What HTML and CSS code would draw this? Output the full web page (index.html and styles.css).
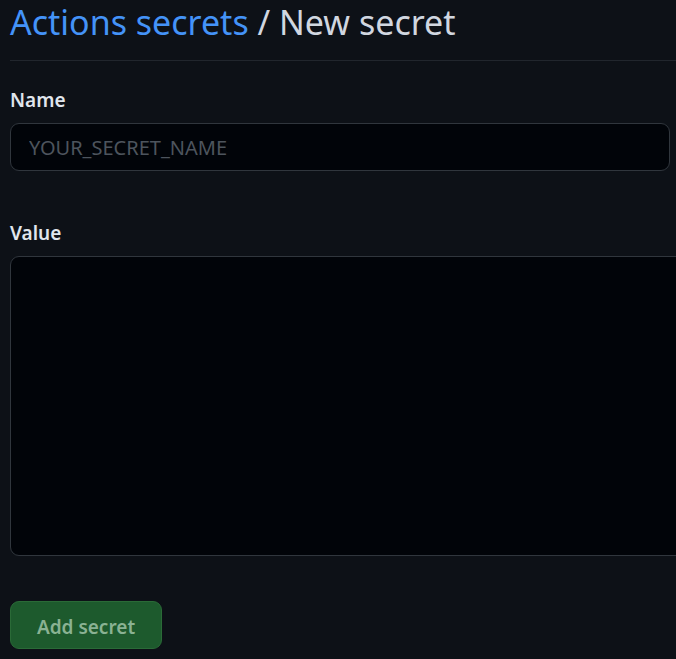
FILE: index.html
```html
<!DOCTYPE html>
<html>
<head>
<meta charset="utf-8">
<link rel="stylesheet" href="styles.css">
</head>
<body>
<div class="page">
  <div class="subhead">
    <h2 class="subhead-heading"><a class="crumb" href="#">Actions secrets</a> / New secret</h2>
  </div>
  <form class="form">
    <div class="group">
      <label class="label" for="name">Name</label>
      <input class="input" id="name" type="text" placeholder="YOUR_SECRET_NAME">
    </div>
    <div class="group group-value">
      <label class="label" for="value">Value</label>
      <textarea class="textarea" id="value"></textarea>
    </div>
    <button class="btn" type="button" disabled>Add secret</button>
  </form>
</div>
</body>
</html>
```
FILE: styles.css
```css
html, body {
  margin: 0;
  padding: 0;
  background: #0d1117;
  color: #e6edf3;
  font-family: "Noto Sans", "Open Sans", sans-serif;
}
.page {
  padding-left: 10px;
  overflow: hidden;
}
.subhead {
  border-bottom: 1px solid #21262d;
  height: 60px;
  margin-right: -10px;
}
.subhead-heading {
  margin: 0;
  padding-top: 0;
  font-size: 34px;
  font-weight: 400;
  line-height: 44px;
  color: #d1d7e0;
}
.crumb {
  color: #4493f8;
  text-decoration: none;
}
.form {
  display: flex;
  flex-direction: column;
  align-items: flex-start;
  padding-top: 24px;
}
.group {
  display: flex;
  flex-direction: column;
  width: 100%;
}
.label {
  font-size: 19px;
  font-weight: 600;
  line-height: 30px;
  color: #e0e6ed;
  margin-bottom: 8px;
}
.input {
  box-sizing: border-box;
  width: 660px;
  height: 48px;
  background: #010409;
  border: 1px solid #30363d;
  border-radius: 9px;
  padding: 0 18px;
  font-family: inherit;
  font-size: 20px;
  color: #e6edf3;
  outline: none;
}
.input::placeholder {
  color: #4d545d;
}
.group-value {
  margin-top: 47px;
}
.textarea {
  box-sizing: border-box;
  width: 680px;
  height: 300px;
  background: #010409;
  border: 1px solid #30363d;
  border-radius: 9px;
  resize: none;
  outline: none;
}
.btn {
  margin-top: 45px;
  width: 152px;
  height: 48px;
  background: #1d5a2d;
  border: 1px solid #2a6a37;
  border-radius: 9px;
  color: #8ab293;
  font-family: inherit;
  font-size: 19px;
  font-weight: 600;
  padding: 3px 0 0;
}
```
